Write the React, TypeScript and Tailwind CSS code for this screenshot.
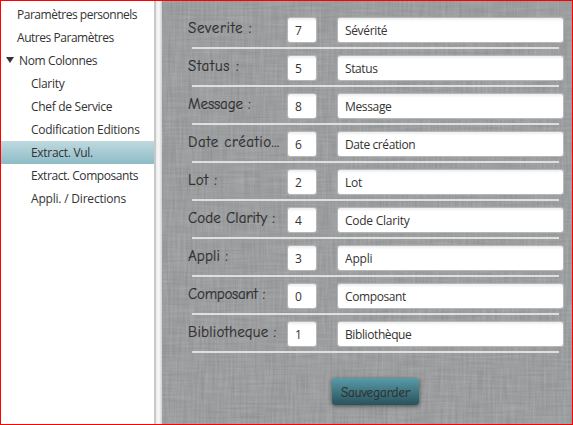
type Item = { label: string; indent: string; spacing: string; open?: boolean; selected?: boolean };

const items: Item[] = [
  { label: "Paramètres personnels", indent: "pl-4", spacing: "tracking-[-0.48px]" },
  { label: "Autres Paramètres", indent: "pl-4", spacing: "tracking-[-0.46px]" },
  { label: "Nom Colonnes", indent: "pl-[5px]", spacing: "tracking-[-0.38px]", open: true },
  { label: "Clarity", indent: "pl-[30px]", spacing: "tracking-[-0.3px]" },
  { label: "Chef de Service", indent: "pl-[30px]", spacing: "tracking-[-0.3px]" },
  { label: "Codification Editions", indent: "pl-[30px]", spacing: "tracking-[-0.27px]" },
  { label: "Extract. Vul.", indent: "pl-[30px]", spacing: "tracking-[-0.3px]", selected: true },
  { label: "Extract. Composants", indent: "pl-[30px]", spacing: "tracking-[-0.43px]" },
  { label: "Appli. / Directions", indent: "pl-[30px]", spacing: "tracking-[-0.2px]" },
];

type Field = { label: string; spacing: string; order: string; value: string; fit: string };

const fields: Field[] = [
  { label: "Severite :", spacing: "tracking-[0.65px]", order: "7", value: "Sévérité", fit: "tracking-[-0.35px]" },
  { label: "Status :", spacing: "tracking-[0.7px]", order: "5", value: "Status", fit: "tracking-[-0.4px]" },
  { label: "Message :", spacing: "tracking-[-0.1px]", order: "8", value: "Message", fit: "tracking-[-0.35px]" },
  { label: "Date créatio...", spacing: "tracking-[0.55px]", order: "6", value: "Date création", fit: "tracking-[-0.4px]" },
  { label: "Lot :", spacing: "tracking-[0.5px]", order: "2", value: "Lot", fit: "tracking-[-0.2px]" },
  { label: "Code Clarity :", spacing: "tracking-[0.08px]", order: "4", value: "Code Clarity", fit: "tracking-[-0.25px]" },
  { label: "Appli :", spacing: "tracking-[0.15px]", order: "3", value: "Appli", fit: "tracking-[-0.2px]" },
  { label: "Composant :", spacing: "tracking-[-0.25px]", order: "0", value: "Composant", fit: "tracking-[-0.4px]" },
  { label: "Bibliotheque :", spacing: "tracking-[0.2px]", order: "1", value: "Bibliothèque", fit: "tracking-[-0.4px]" },
];

const comic =
  "font-['Comic_Sans_MS','Comic_Neue','Open_Sans',sans-serif] text-[#303030] [-webkit-text-stroke:0.2px_#303030]";
const box =
  "h-6 shrink-0 rounded-[2px] bg-linear-to-b from-[#ededed] via-white via-15% to-white px-[7px] pt-px text-[12px] leading-[23px] text-[#333] shadow-[0_0_1px_1px_#b9babb] outline-none";

/* Woven linen: one noise layer per thread direction over flat grey. */
function Linen() {
  return (
    <svg className="absolute inset-0 h-full w-full" aria-hidden="true">
      <filter id="weft" x="0" y="0" width="100%" height="100%" colorInterpolationFilters="sRGB">
        <feTurbulence type="fractalNoise" baseFrequency="0.03 0.45" numOctaves="2" seed="4" />
        <feColorMatrix values="0.16 0 0 0 0.532  0.16 0 0 0 0.538  0.16 0 0 0 0.544  0 0 0 0 1" />
      </filter>
      <filter id="warp" x="0" y="0" width="100%" height="100%" colorInterpolationFilters="sRGB">
        <feTurbulence type="fractalNoise" baseFrequency="0.45 0.03" numOctaves="2" seed="9" />
        <feColorMatrix values="0.17 0 0 0 0.527  0.17 0 0 0 0.533  0.17 0 0 0 0.539  0 0 0 0 1" />
      </filter>
      <rect width="100%" height="100%" filter="url(#weft)" />
      <rect width="100%" height="100%" filter="url(#warp)" opacity="0.5" />
    </svg>
  );
}

export default function App() {
  return (
    <div className="flex h-[425px] w-[573px] overflow-hidden border border-[#ff0000] bg-white font-['Open_Sans','Noto_Sans',sans-serif] text-[12px] text-[#333]">
      <nav className="w-[153px] shrink-0 pt-[2px]">
        {items.map((item) => (
          <div
            key={item.label}
            className={`flex h-[23px] items-center whitespace-nowrap ${item.indent} ${
              item.selected ? "bg-linear-to-b from-[#bfd9df] to-[#8dbcc7]" : ""
            }`}
          >
            {item.open && (
              <svg className="mr-[5px] mb-[2px] h-[6px] w-[8px]" viewBox="0 0 8 6">
                <path d="M0 0H8L4 6Z" fill="#333" />
              </svg>
            )}
            <span className={`pt-px ${item.spacing}`}>{item.label}</span>
          </div>
        ))}
      </nav>
      <div className="w-2 shrink-0 border-l-2 border-[#c8c8c8] bg-linear-to-r from-[#ececec] via-[#f8f8f8] to-[#d0d0d0]" />
      <main className="relative min-w-0 flex-1 bg-[#9b9d9e]">
        <Linen />
        <div className="relative pt-[17px] pl-[25px]">
          {fields.map((field) => (
            <div key={field.order} className="h-[38px]">
              <div className="flex">
                <div
                  className={`-mt-[2px] h-6 w-[101px] shrink-0 pl-px text-[15px] leading-6 whitespace-nowrap ${comic} ${field.spacing}`}
                >
                  {field.label}
                </div>
                <input readOnly className={`${box} w-[28px]`} value={field.order} />
                <input readOnly className={`${box} ${field.fit} ml-[22px] w-[225px]`} value={field.value} />
              </div>
              <div className="mt-[5px] ml-[5px] h-[2px] w-[367px] bg-[#dedfdf]" />
            </div>
          ))}
          <button
            className={`mt-[18px] ml-[145px] block h-[27px] w-[87px] rounded-[3px] bg-linear-to-b from-[#5a9ba9] to-[#28535c] pt-[3px] text-[13px] tracking-[0px] shadow-[0_1px_4px_rgba(0,0,0,0.55)] ${comic}`}
          >
            Sauvegarder
          </button>
        </div>
      </main>
    </div>
  );
}
